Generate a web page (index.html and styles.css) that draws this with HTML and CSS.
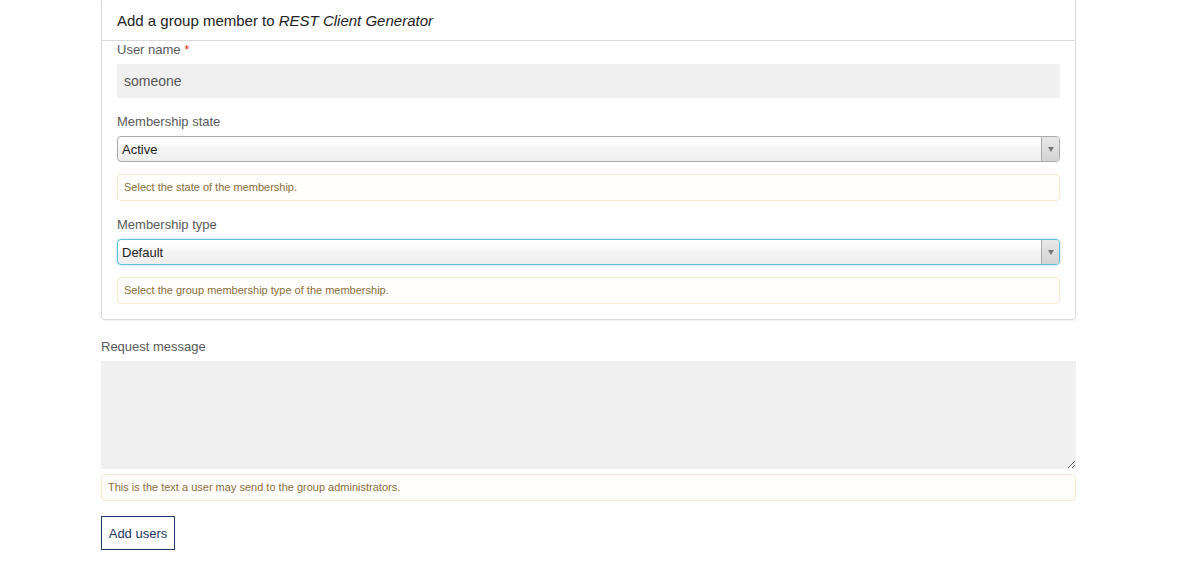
FILE: index.html
```html
<!DOCTYPE html>
<html>
<head>
<meta charset="utf-8">
<link rel="stylesheet" href="styles.css">
</head>
<body>
<div class="page">
  <div class="panel">
    <div class="panel-heading">Add a group member to <em>REST Client Generator</em></div>
    <div class="panel-body">
      <div class="form-group">
        <label class="label">User name <span class="req">*</span></label>
        <div class="input">someone</div>
      </div>
      <div class="form-group">
        <label class="label">Membership state</label>
        <div class="select">
          <span class="select-value">Active</span>
          <span class="select-arrow"><span class="tri"></span></span>
        </div>
        <div class="help">Select the state of the membership.</div>
      </div>
      <div class="form-group">
        <label class="label">Membership type</label>
        <div class="select focused">
          <span class="select-value">Default</span>
          <span class="select-arrow"><span class="tri"></span></span>
        </div>
        <div class="help">Select the group membership type of the membership.</div>
      </div>
    </div>
  </div>
  <div class="outer-group">
    <label class="label">Request message</label>
    <textarea class="textarea"></textarea>
    <div class="help help-outer">This is the text a user may send to the group administrators.</div>
  </div>
  <button class="btn">Add users</button>
</div>
</body>
</html>
```

FILE: styles.css
```css
* { box-sizing: border-box; }
html, body { margin: 0; padding: 0; background: #fff; }
body {
  font-family: "Liberation Sans", Arial, sans-serif;
  color: #333;
}
.page {
  width: 975px;
  margin-left: 101px;
}
.panel {
  border: 1px solid #dcdcdc;
  border-top: none;
  border-radius: 0 0 4px 4px;
  box-shadow: 0 1px 2px rgba(0,0,0,0.06);
}
.panel-heading {
  height: 41px;
  padding: 12px 15px 0;
  font-size: 15px;
  color: #222;
  border-bottom: 1px solid #dcdcdc;
}
.panel-heading em { font-style: italic; }
.panel-body {
  padding: 0 15px 15px;
}
.form-group { margin-bottom: 15px; }
.form-group:last-child { margin-bottom: 0; }
.label {
  display: block;
  font-size: 13px;
  line-height: 18px;
  color: #5a5a5a;
  margin-bottom: 5px;
}
.req { color: #e32; }
.input {
  height: 34px;
  background: #f0f0f0;
  font-size: 14px;
  line-height: 34px;
  padding: 0 7px;
  color: #555;
}
.select {
  display: flex;
  height: 26px;
  border: 1px solid #aaa;
  border-radius: 4px;
  background: linear-gradient(#ffffff 20%, #f4f4f4 50%, #eeeeee 100%);
  overflow: hidden;
}
.select.focused {
  border-color: #5bc0de;
  box-shadow: 0 0 3px rgba(91,192,222,0.6);
}
.select-value {
  flex: 1;
  font-size: 13px;
  line-height: 26px;
  padding-left: 4px;
  color: #222;
}
.select-arrow {
  width: 18px;
  border-left: 1px solid #aaa;
  background: linear-gradient(#e8e8e8, #d4d4d4);
  display: flex;
  align-items: center;
  justify-content: center;
}
.tri {
  width: 0; height: 0;
  border-left: 3.5px solid transparent;
  border-right: 3.5px solid transparent;
  border-top: 5px solid #777;
  margin-top: 1px;
}
.help {
  margin-top: 12px;
  height: 27px;
  border: 1px solid #f8ead0;
  border-radius: 4px;
  background: #fffefd;
  font-size: 11px;
  line-height: 25px;
  padding: 0 6px;
  color: #8a6d3b;
}
.outer-group { margin-top: 18px; }
.textarea {
  display: block;
  width: 100%;
  height: 108px;
  border: none;
  background: #f0f0f0;
  resize: vertical;
  margin: 0;
  padding: 6px;
  font-family: inherit;
}
.help-outer { margin-top: 5px; }
.btn {
  margin-top: 15px;
  height: 34px;
  width: 74px;
  padding: 0;
  border: 1px solid #1d3664;
  background: #fff;
  color: #1d3664;
  font-family: inherit;
  font-size: 13px;
  border-radius: 0;
}
```
